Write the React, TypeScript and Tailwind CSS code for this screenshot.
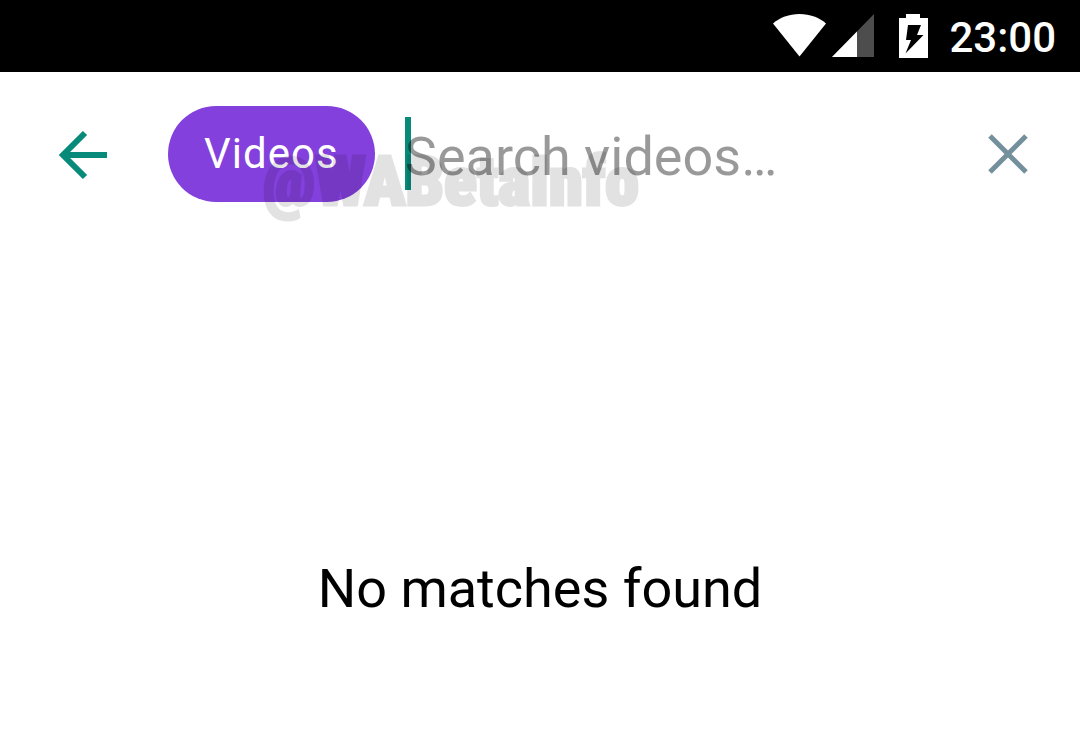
import React, { useState } from "react";

const StatusBar = () => (
  <div className="flex h-[72px] items-center justify-end bg-black pr-6 text-white">
    <svg className="h-[72px] w-[160px]" viewBox="0 0 160 72" fill="currentColor" aria-hidden="true">
      <path d="M4 23.500C11 17.500 20 14 30.500 14S50 17.500 57 23.500L30.500 56.500Z" />
      <path d="M63 57L105 14V57Z" fillOpacity="0.3" />
      <path d="M63 57L88 31.500V57Z" />
      <path d="M137 14H151V18H159V58H130V18H137Z" />
      <path d="M139 25H152L148 35H154.500L136.500 53.500L142 40H137Z" fill="#000" />
    </svg>
    <time className="ml-5 pt-1 text-[42px] leading-[48px] font-medium">23:00</time>
  </div>
);

const Watermark = () => (
  <span
    aria-hidden="true"
    className="pointer-events-none absolute top-[70px] left-[263px] font-['Roboto_Condensed',Roboto,sans-serif] text-[68px] leading-[80px] font-black text-black opacity-[0.11] select-none [-webkit-text-stroke:3px_black]"
  >
    @WABetaInfo
  </span>
);

const App = () => {
  const [query, setQuery] = useState("");

  return (
    <div className="min-h-screen bg-white font-[Roboto,sans-serif] text-black">
      <StatusBar />

      <header className="relative flex items-center pt-[34px] pr-[46px] pl-[53px]">
        <button type="button" aria-label="Back" className="text-[#078a79]">
          <svg className="size-[60px]" viewBox="0 0 60 60" fill="none" stroke="currentColor" strokeWidth="6">
            <path d="M54 31H10M32 9L10 31L32 53" />
          </svg>
        </button>

        <button
          type="button"
          className="ml-[55px] h-24 shrink-0 rounded-full bg-[#8340dc] px-9 text-[42px] leading-[48px] tracking-wide text-white"
        >
          Videos
        </button>

        <div className="relative ml-[30px] flex h-[96px] min-w-0 flex-1 items-center">
          <span aria-hidden="true" className="absolute top-[11px] left-0 h-[73px] w-[6px] bg-[#078a79]" />
          <input
            type="text"
            aria-label="Search videos"
            placeholder="Search videos…"
            value={query}
            onChange={(e) => setQuery(e.target.value)}
            className="relative h-[76px] w-full bg-transparent pt-1 text-[54px] leading-[72px] caret-[#078a79] outline-none placeholder:text-black/40"
          />
        </div>

        <button type="button" aria-label="Clear search" className="shrink-0 text-[#74909d]" onClick={() => setQuery("")}>
          <svg className="size-[52px]" viewBox="0 0 52 52" fill="none" stroke="currentColor" strokeWidth="5">
            <path d="M8 8L44 44M44 8L8 44" />
          </svg>
        </button>

        <Watermark />
      </header>

      <main className="px-8 pt-[355px] text-center">
        <p className="text-[54px] leading-[64px]">No matches found</p>
      </main>
    </div>
  );
};

export default App;
